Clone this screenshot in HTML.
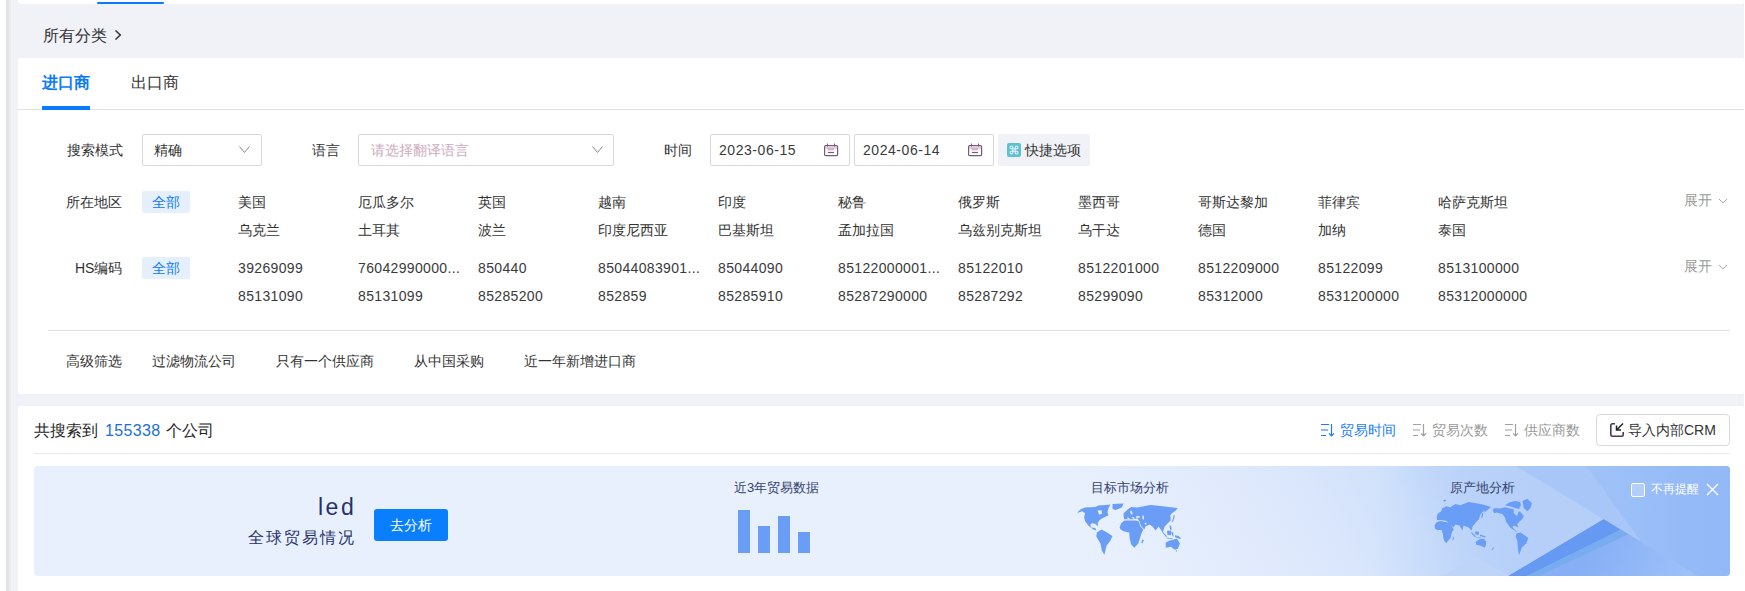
<!DOCTYPE html>
<html><head><meta charset="utf-8">
<style>
*{margin:0;padding:0;box-sizing:border-box}
html,body{width:1745px;height:591px;overflow:hidden;background:#fff;font-family:"Liberation Sans",sans-serif;color:#333}
.abs{position:absolute;white-space:nowrap}
#strip1{position:absolute;left:6px;top:0;width:3px;height:591px;background:#e4e4e8}
#strip2{position:absolute;left:9px;top:0;width:2px;height:591px;background:#ebecf0}
#main{position:absolute;left:11px;top:0;width:1733px;height:591px;background:#f0f2f7}
.card{position:absolute;background:#fff;border-radius:3px}
.t14{font-size:14px;line-height:20px}
.lbl{color:#333}
.box{position:absolute;border:1px solid #d9d9d9;border-radius:2px;background:#fff}
.tag{position:absolute;background:#e6f0fd;color:#0c7bfb;font-size:14px;line-height:22px;text-align:center;border-radius:2px}
.c{position:absolute;font-size:14px;line-height:20px;color:#333;white-space:nowrap}
.num{letter-spacing:0.35px;color:#3a3a3a}
.dt{letter-spacing:0.55px;color:#3a3a3a}
</style></head><body>
<div id="strip1"></div><div id="strip2"></div>
<div id="main"></div>
<!-- top bar -->
<div class="card" style="left:18px;top:-10px;width:1726px;height:14px"></div>
<div class="abs" style="left:97px;top:2px;width:67px;height:2px;background:#0a7bff;border-radius:1px"></div>
<!-- breadcrumb -->
<div class="abs" style="left:43px;top:26px;font-size:16px;line-height:20px;color:#333">所有分类</div>
<svg class="abs" style="left:113px;top:29px" width="10" height="12" viewBox="0 0 10 12"><path d="M2.5 1.5 L7.3 6 L2.5 10.5" fill="none" stroke="#333" stroke-width="1.5"/></svg>
<!-- card 1 -->
<div class="card" style="left:18px;top:58px;width:1726px;height:336px"></div>
<div class="abs" style="left:42px;top:73px;font-size:16px;line-height:20px;color:#0a7bff;font-weight:bold">进口商</div>
<div class="abs" style="left:131px;top:73px;font-size:16px;line-height:20px;color:#333">出口商</div>
<div class="abs" style="left:18px;top:109px;width:1726px;height:1px;background:#e0e0e0"></div>
<div class="abs" style="left:42px;top:106px;width:48px;height:4px;background:#0a7bff"></div>

<!-- form row -->
<div class="c" style="left:67px;top:140px">搜索模式</div>
<div class="box" style="left:142px;top:134px;width:120px;height:32px"></div>
<div class="c" style="left:154px;top:140px">精确</div>
<svg class="abs" style="left:239px;top:146px" width="11" height="8" viewBox="0 0 11 8"><path d="M0.5 0.5 L5.5 6.5 L10.5 0.5" fill="none" stroke="#888" stroke-width="1"/></svg>

<div class="c" style="left:312px;top:140px">语言</div>
<div class="box" style="left:358px;top:134px;width:256px;height:32px"></div>
<div class="c" style="left:371px;top:140px;color:#cdabbc">请选择翻译语言</div>
<svg class="abs" style="left:592px;top:146px" width="11" height="8" viewBox="0 0 11 8"><path d="M0.5 0.5 L5.5 6.5 L10.5 0.5" fill="none" stroke="#888" stroke-width="1"/></svg>

<div class="c" style="left:664px;top:140px">时间</div>
<div class="box" style="left:710px;top:134px;width:140px;height:32px"></div>
<div class="c dt" style="left:719px;top:140px">2023-06-15</div>
<svg class="abs" style="left:824px;top:143px" width="15" height="14" viewBox="0 0 15 14"><rect x="0.6" y="2.6" width="13" height="10" rx="1.2" fill="none" stroke="#6e5a7a" stroke-width="1.2"/><path d="M3.5 0.5V3.5M10.5 0.5V3.5" stroke="#6e5a7a" stroke-width="1"/><rect x="1.2" y="4.3" width="12" height="1.3" fill="#d9b3c4"/><rect x="3.5" y="5" width="6.5" height="2.4" fill="#d9b3c4"/><path d="M3.8 9.5H10" stroke="#6e5a7a" stroke-width="1.2"/></svg>
<div class="box" style="left:854px;top:134px;width:140px;height:32px"></div>
<div class="c dt" style="left:863px;top:140px">2024-06-14</div>
<svg class="abs" style="left:968px;top:143px" width="15" height="14" viewBox="0 0 15 14"><rect x="0.6" y="2.6" width="13" height="10" rx="1.2" fill="none" stroke="#6e5a7a" stroke-width="1.2"/><path d="M3.5 0.5V3.5M10.5 0.5V3.5" stroke="#6e5a7a" stroke-width="1"/><rect x="1.2" y="4.3" width="12" height="1.3" fill="#d9b3c4"/><rect x="3.5" y="5" width="6.5" height="2.4" fill="#d9b3c4"/><path d="M3.8 9.5H10" stroke="#6e5a7a" stroke-width="1.2"/></svg>
<div class="abs" style="left:998px;top:134px;width:92px;height:32px;background:#f0f2f7;border-radius:2px"></div>
<svg class="abs" style="left:1007px;top:143px" width="14" height="14" viewBox="0 0 14 14"><rect width="14" height="14" rx="2" fill="#5ec1cf"/><path d="M5.8 5.8V4.4A1.4 1.4 0 1 0 4.4 5.8H9.6A1.4 1.4 0 1 0 8.2 4.4V9.6A1.4 1.4 0 1 0 9.6 8.2H4.4A1.4 1.4 0 1 0 5.8 9.6Z" fill="none" stroke="#e6f3f7" stroke-width="1.1"/></svg>
<div class="c" style="left:1025px;top:140px">快捷选项</div>

<!-- regions -->
<div class="c" style="left:66px;top:192px">所在地区</div>
<div class="tag" style="left:142px;top:191px;width:48px">全部</div>
<div class="c" style="left:75px;top:258px">HS编码</div>
<div class="tag" style="left:142px;top:257px;width:48px">全部</div>

<div class="c" style="left:238px;top:192px">美国</div>
<div class="c" style="left:358px;top:192px">厄瓜多尔</div>
<div class="c" style="left:478px;top:192px">英国</div>
<div class="c" style="left:598px;top:192px">越南</div>
<div class="c" style="left:718px;top:192px">印度</div>
<div class="c" style="left:838px;top:192px">秘鲁</div>
<div class="c" style="left:958px;top:192px">俄罗斯</div>
<div class="c" style="left:1078px;top:192px">墨西哥</div>
<div class="c" style="left:1198px;top:192px">哥斯达黎加</div>
<div class="c" style="left:1318px;top:192px">菲律宾</div>
<div class="c" style="left:1438px;top:192px">哈萨克斯坦</div>
<div class="c" style="left:238px;top:220px">乌克兰</div>
<div class="c" style="left:358px;top:220px">土耳其</div>
<div class="c" style="left:478px;top:220px">波兰</div>
<div class="c" style="left:598px;top:220px">印度尼西亚</div>
<div class="c" style="left:718px;top:220px">巴基斯坦</div>
<div class="c" style="left:838px;top:220px">孟加拉国</div>
<div class="c" style="left:958px;top:220px">乌兹别克斯坦</div>
<div class="c" style="left:1078px;top:220px">乌干达</div>
<div class="c" style="left:1198px;top:220px">德国</div>
<div class="c" style="left:1318px;top:220px">加纳</div>
<div class="c" style="left:1438px;top:220px">泰国</div>
<div class="c num" style="left:238px;top:258px">39269099</div>
<div class="c num" style="left:358px;top:258px">76042990000...</div>
<div class="c num" style="left:478px;top:258px">850440</div>
<div class="c num" style="left:598px;top:258px">85044083901...</div>
<div class="c num" style="left:718px;top:258px">85044090</div>
<div class="c num" style="left:838px;top:258px">85122000001...</div>
<div class="c num" style="left:958px;top:258px">85122010</div>
<div class="c num" style="left:1078px;top:258px">8512201000</div>
<div class="c num" style="left:1198px;top:258px">8512209000</div>
<div class="c num" style="left:1318px;top:258px">85122099</div>
<div class="c num" style="left:1438px;top:258px">8513100000</div>
<div class="c num" style="left:238px;top:286px">85131090</div>
<div class="c num" style="left:358px;top:286px">85131099</div>
<div class="c num" style="left:478px;top:286px">85285200</div>
<div class="c num" style="left:598px;top:286px">852859</div>
<div class="c num" style="left:718px;top:286px">85285910</div>
<div class="c num" style="left:838px;top:286px">85287290000</div>
<div class="c num" style="left:958px;top:286px">85287292</div>
<div class="c num" style="left:1078px;top:286px">85299090</div>
<div class="c num" style="left:1198px;top:286px">85312000</div>
<div class="c num" style="left:1318px;top:286px">8531200000</div>
<div class="c num" style="left:1438px;top:286px">85312000000</div>
<div class="c" style="left:1684px;top:190px;font-size:14px;color:#9a9a9a">展开</div>
<svg class="abs" style="left:1718px;top:197px" width="10" height="7" viewBox="0 0 10 7"><path d="M1 2L5 5.8L9 2" fill="none" stroke="#a8a2ac" stroke-width="1"/></svg>
<div class="c" style="left:1684px;top:256px;font-size:14px;color:#9a9a9a">展开</div>
<svg class="abs" style="left:1718px;top:263px" width="10" height="7" viewBox="0 0 10 7"><path d="M1 2L5 5.8L9 2" fill="none" stroke="#a8a2ac" stroke-width="1"/></svg>

<div class="abs" style="left:48px;top:330px;width:1682px;height:1px;background:#e0e0e0"></div>
<div class="c" style="left:66px;top:351px">高级筛选</div>
<div class="c" style="left:152px;top:351px">过滤物流公司</div>
<div class="c" style="left:276px;top:351px">只有一个供应商</div>
<div class="c" style="left:414px;top:351px">从中国采购</div>
<div class="c" style="left:524px;top:351px">近一年新增进口商</div>

<!-- card 2 -->
<div class="card" style="left:18px;top:406px;width:1726px;height:200px"></div>
<div class="abs" style="left:34px;top:421px;font-size:16px;line-height:20px;color:#262626">共搜索到</div>
<div class="abs num" style="left:105px;top:421px;font-size:16px;line-height:20px;color:#1a6fd8">155338</div>
<div class="abs" style="left:166px;top:421px;font-size:16px;line-height:20px;color:#262626">个公司</div>
<div class="abs" style="left:34px;top:453px;width:1696px;height:1px;background:#e8e8e8"></div>
<div class="box" style="left:1596px;top:414px;width:134px;height:32px;border-radius:4px"></div>
<svg class="abs" style="left:1609px;top:422px" width="16" height="16" viewBox="0 0 16 16"><path d="M6 1.8H3.5Q1.8 1.8 1.8 3.5V12.5Q1.8 14.2 3.5 14.2H12.5Q14.2 14.2 14.2 12.5V10" fill="none" stroke="#4a3a58" stroke-width="1.6"/><path d="M14 1.5L7.5 8M7.5 3.5V8H12" fill="none" stroke="#222" stroke-width="1.5"/></svg>
<div class="c" style="left:1628px;top:420px">导入内部CRM</div>
<svg class="abs" style="left:1320px;top:423px" width="15" height="15" viewBox="0 0 15 15"><path d="M1 1.5H9M1 7H8M1 12.5H6M11.5 1V12.8M9 10.3L11.5 12.8L14 10.3" fill="none" stroke="#1a7cf5" stroke-width="1.2"/></svg>
<div class="c" style="left:1340px;top:420px;color:#1a7cf5">贸易时间</div>
<svg class="abs" style="left:1412px;top:423px" width="15" height="15" viewBox="0 0 15 15"><path d="M1 1.5H9M1 7H8M1 12.5H6M11.5 1V12.8M9 10.3L11.5 12.8L14 10.3" fill="none" stroke="#a0a0a0" stroke-width="1.2"/></svg>
<div class="c" style="left:1432px;top:420px;color:#999">贸易次数</div>
<svg class="abs" style="left:1504px;top:423px" width="15" height="15" viewBox="0 0 15 15"><path d="M1 1.5H9M1 7H8M1 12.5H6M11.5 1V12.8M9 10.3L11.5 12.8L14 10.3" fill="none" stroke="#a0a0a0" stroke-width="1.2"/></svg>
<div class="c" style="left:1524px;top:420px;color:#999">供应商数</div>

<!-- banner -->
<div class="abs" style="left:34px;top:466px;width:1696px;height:110px;border-radius:4px;overflow:hidden">
<svg width="1696" height="110" viewBox="0 0 1696 110" style="position:absolute;left:0;top:0">
<defs>
<linearGradient id="bg" gradientUnits="userSpaceOnUse" x1="781" y1="-446" x2="1259" y2="-719">
<stop offset="0" stop-color="#e8f0fd"/><stop offset="0.26" stop-color="#dfe9fc"/><stop offset="0.5" stop-color="#d0e1fb"/><stop offset="0.62" stop-color="#c0d7fa"/><stop offset="1" stop-color="#b2cdf9"/>
</linearGradient>
<linearGradient id="lt" gradientUnits="userSpaceOnUse" x1="1340" y1="0" x2="1500" y2="0">
<stop offset="0" stop-color="#b5cff9" stop-opacity="0"/><stop offset="1" stop-color="#b5cff9"/>
</linearGradient>
<linearGradient id="dk" gradientUnits="userSpaceOnUse" x1="1560" y1="0" x2="1696" y2="0">
<stop offset="0" stop-color="#a0c2f8"/><stop offset="0.7" stop-color="#94baf7"/><stop offset="1" stop-color="#92b8f6"/>
</linearGradient>
<linearGradient id="mt" gradientUnits="userSpaceOnUse" x1="1560" y1="70" x2="1650" y2="110">
<stop offset="0" stop-color="#86aff5"/><stop offset="1" stop-color="#9cc0f8"/>
</linearGradient>
</defs>
<rect width="1696" height="110" fill="url(#bg)"/>
<polygon points="1482,0 1696,0 1696,110 1474.4,110 1569.6,53.2" fill="url(#dk)"/>
<polygon points="1300,0 1482,0 1569.6,53.2 1474.4,110 1300,110" fill="url(#lt)"/>
<polygon points="1482,0 1552,0 1607,75.5 1569.6,53.2" fill="#a8c7f8"/>
<polygon points="1408.8,110 1442,90.4 1475,110" fill="#bed4f9"/>
<polygon points="1474.4,110 1569.6,53.2 1664,110" fill="url(#mt)"/>
<polygon points="1474.4,110 1569.6,53.2 1586.7,63.7 1492.8,110" fill="#6699f2"/>
<polygon points="1492.8,110 1586.7,63.7 1594.3,68.2 1504.2,110" fill="#77acee"/>
</svg>
</div>
<div class="abs" style="left:318px;top:494px;font-size:23px;line-height:26px;color:#28306b;letter-spacing:2.5px">led</div>
<div class="abs" style="left:248px;top:528px;font-size:16px;line-height:20px;color:#28306b;letter-spacing:2px">全球贸易情况</div>
<div class="abs" style="left:374px;top:509px;width:74px;height:32px;background:#0a7ffd;border-radius:3px;color:#fff;font-size:14px;line-height:32px;text-align:center">去分析</div>
<div class="abs" style="left:734px;top:478px;font-size:13px;line-height:20px;color:#34436e">近3年贸易数据</div>
<div class="abs" style="left:738px;top:510px;width:12px;height:43px;background:#6a9ef6"></div>
<div class="abs" style="left:758px;top:526px;width:12px;height:27px;background:#6a9ef6"></div>
<div class="abs" style="left:778px;top:516px;width:12px;height:37px;background:#6a9ef6"></div>
<div class="abs" style="left:798px;top:532px;width:12px;height:21px;background:#6a9ef6"></div>
<div class="abs" style="left:1091px;top:478px;font-size:13px;line-height:20px;color:#34436e">目标市场分析</div>
<div class="abs" style="left:1450px;top:478px;font-size:13px;line-height:20px;color:#34436e">原产地分析</div>
<svg class="abs" style="left:1070px;top:495px" width="120" height="70" viewBox="0 0 120 70"><path fill="#6a9ef6" d="M7.5,17.2 L11.1,14.1 L15.1,12.6 L25.3,12.1 L28.3,10.6 L35.4,10.1 L40.5,9.6 L38.5,13.1 L37.5,17.2 L38.5,20.2 L32.4,23.3 L29.4,25.3 L27.8,27.8 L27.8,31.4 L26.5,30.0 L25.0,28.8 L22.3,28.3 L20.2,29.4 L21.2,32.4 L25.3,32.9 L26.3,35.4 L23.3,34.4 L18.2,30.4 L15.1,26.3 L14.1,22.2 L15.1,18.2 L12.1,16.2 L8.0,17.7Z M42.5,9.1 L53.7,8.6 L51.7,12.6 L45.6,15.1 L42.5,14.1Z M26.8,37.5 L31.4,34.4 L35.4,36.5 L42.5,41.0 L40.5,45.6 L36.5,50.7 L34.4,59.8 L31.9,55.7 L30.4,48.6 L26.3,41.5Z M53.6,18.2 L58.2,14.1 L61.2,12.1 L67.3,12.6 L75.4,11.1 L80.5,10.1 L90.7,11.1 L98.8,12.1 L107.9,13.1 L104.9,16.2 L101.8,18.2 L100.3,20.2 L100.8,25.3 L97.8,28.3 L94.7,31.4 L93.7,34.4 L92.7,37.5 L90.7,34.4 L88.6,31.4 L85.6,35.4 L82.5,31.4 L79.5,29.4 L75.4,31.4 L74.4,34.4 L71.4,31.4 L69.3,26.3 L67.3,23.3 L63.3,24.3 L58.2,24.3 L54.1,24.3 L53.6,21.2Z M49.6,32.4 L51.1,28.3 L54.5,25.4 L60.2,25.6 L66.0,25.5 L68.8,26.5 L70.4,31.4 L73.4,34.4 L71.4,38.5 L69.9,43.5 L68.3,48.6 L64.3,52.7 L61.2,49.6 L59.7,43.5 L59.2,37.5 L54.1,36.5 L50.6,34.4Z M72.4,44.6 L73.9,45.1 L72.4,48.6 L71.2,47.6Z M91.5,36.3 L92.6,36.5 L96.9,41.3 L96.2,42.3Z M96.5,42.4 L102.8,43.4 L102.6,44.2 L96.5,43.3Z M96.9,36.0 L100.5,35.4 L101.8,37.5 L100.8,40.3 L97.5,40.0Z M102.0,37.3 L103.6,37.6 L103.0,39.5 L104.0,41.3 L102.8,41.4 L101.9,39.5Z M104.9,40.3 L108.5,41.0 L111.0,43.2 L110.0,44.0 L105.0,42.0Z M99.6,30.2 L100.9,30.5 L101.8,34.5 L100.6,35.2 L99.8,33.0Z M103.6,20.0 L104.8,20.6 L103.9,24.5 L102.2,27.5 L101.6,26.6 L103.0,24.0Z M95.7,47.6 L99.8,45.6 L103.8,44.6 L106.9,43.5 L109.9,48.6 L107.9,53.7 L104.9,54.7 L100.8,51.7 L95.7,52.7Z M106.0,55.5 L107.0,55.5 L106.5,57.0 L105.8,56.5Z"/><path fill="#e7effc" d="M60.0,16.0 L61.8,15.8 L62.6,19.3 L61.0,19.6Z M66.0,21.3 L69.6,21.0 L69.8,22.6 L66.5,22.9Z M72.3,20.5 L73.8,20.8 L74.0,24.4 L72.6,24.2Z M74.6,27.6 L76.6,28.4 L76.2,30.0 L74.9,29.2Z M27.5,15.5 L31.5,15.2 L32.0,19.0 L29.0,19.5Z M57.0,22.3 L60.0,23.6 L58.0,24.6Z M61.5,22.6 L64.0,22.0 L64.5,24.5Z"/></svg>
<svg class="abs" style="left:1425px;top:490px" width="120" height="70" viewBox="0 0 120 70"><path fill="#6a9ef6" d="M9.6,35.5 L11.1,32.4 L15.2,30.9 L20.2,31.9 L25.3,32.9 L26.8,36.5 L28.9,39.5 L26.8,42.6 L25.8,47.6 L21.2,53.2 L18.7,49.7 L17.7,43.6 L16.7,40.0 L12.1,40.0 L9.9,38.5Z M27.8,46.6 L28.9,47.0 L28.5,50.2 L27.5,50.0Z M12.1,29.9 L11.6,27.8 L12.6,23.8 L16.2,21.2 L17.2,18.2 L21.2,16.2 L25.3,17.2 L30.4,14.1 L35.5,15.2 L43.6,12.1 L49.7,13.1 L57.8,14.6 L66.0,17.1 L59.4,22.6 L59.8,20.2 L55.8,23.8 L53.7,29.4 L50.7,32.4 L47.6,36.5 L46.6,40.5 L43.6,37.5 L38.5,35.5 L37.5,40.5 L34.4,35.5 L30.4,34.4 L28.4,37.5 L24.3,32.9 L20.2,30.4 L15.2,29.9Z M18.2,10.1 L21.2,9.8 L20.5,11.5 L18.5,11.3Z M57.0,23.0 L58.2,23.5 L57.5,28.0 L56.3,27.5Z M45.6,42.6 L47.0,42.6 L51.0,46.5 L50.0,47.3Z M50.0,41.5 L54.0,41.8 L53.5,45.0 L50.5,44.5Z M55.0,44.5 L60.8,46.5 L60.0,47.6 L55.0,46.0Z M51.0,47.4 L56.0,47.6 L56.0,48.2 L51.0,48.0Z M50.7,51.7 L54.7,49.2 L58.8,48.7 L61.3,51.7 L60.8,55.8 L59.8,57.8 L55.8,55.8 L51.2,54.7Z M66.5,60.0 L68.7,57.2 L69.2,57.8 L67.0,60.5Z M67.7,19.9 L69.1,18.2 L75.1,18.5 L79.9,17.2 L85.3,18.5 L88.7,19.2 L88.7,23.3 L92.1,26.0 L93.4,21.9 L94.8,21.2 L98.8,26.0 L97.5,28.7 L94.1,32.1 L92.1,34.1 L93.4,37.5 L89.4,35.4 L87.3,36.8 L89.4,39.5 L92.1,41.9 L90.7,41.5 L85.3,37.5 L81.2,32.1 L79.9,27.3 L77.2,23.9 L71.8,22.6 L69.1,23.3Z M80.0,15.5 L84.0,12.5 L90.0,11.0 L95.0,12.0 L96.0,15.0 L94.0,19.0 L90.0,18.0 L86.0,16.5Z M97.5,11.1 L102.2,8.7 L106.9,13.1 L105.6,17.9 L102.2,21.2 L98.8,17.9Z M91.3,43.5 L95.7,42.4 L103.4,47.9 L101.2,53.4 L96.8,57.7 L94.0,64.9 L92.9,58.8 L92.4,51.2 L90.7,46.8Z"/></svg>
<div class="abs" style="left:1631px;top:483px;width:14px;height:14px;border:1.5px solid #fff;border-radius:2px;background:rgba(255,255,255,0.25)"></div>
<div class="abs" style="left:1651px;top:479px;font-size:12px;line-height:20px;color:#fff">不再提醒</div>
<svg class="abs" style="left:1706px;top:483px" width="13" height="13" viewBox="0 0 13 13"><path d="M1 1L12 12M12 1L1 12" stroke="#fff" stroke-width="1.4"/></svg>
</body></html>
